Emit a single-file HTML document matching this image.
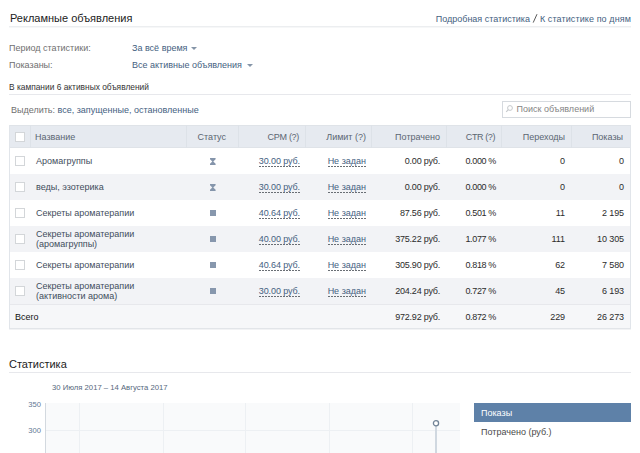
<!DOCTYPE html>
<html><head><meta charset="utf-8"><style>
html,body{margin:0;padding:0;background:#fff;}
body{width:640px;height:453px;position:relative;overflow:hidden;font-family:"Liberation Sans", sans-serif;}
.t{position:absolute;white-space:pre;}
.r{position:absolute;}
.dl{padding-bottom:1px;background:repeating-linear-gradient(90deg,#6a6f75 0 2px,transparent 2px 3px) left bottom/100% 1px no-repeat;}
</style></head><body>
<div class="t" style="top:12px;font-size:11px;line-height:12px;color:#222;left:10px;">Рекламные объявления</div>
<div class="t" style="top:14px;font-size:9px;line-height:10px;color:#45617f;letter-spacing:0.1px;right:9px;">К статистике по дням</div>
<div class="t" style="top:14px;font-size:9px;line-height:10px;color:#45617f;right:110px;">Подробная статистика</div>
<svg class="r" style="left:531px;top:12px" width="8" height="12"><path d="M6 2.2 L2.2 10.6" stroke="#5a5a5a" stroke-width="1"/></svg>
<div class="r" style="left:9px;top:26px;width:622px;height:1px;background:#eceef0;"></div>
<div class="r" style="left:9px;top:27px;width:622px;height:1px;background:#f6f7f8;"></div>
<div class="t" style="top:43px;font-size:9px;line-height:10px;color:#6f6f6f;left:9px;">Период статистики:</div>
<div class="t" style="top:60px;font-size:9px;line-height:10px;color:#6f6f6f;left:9px;">Показаны:</div>
<div class="t" style="top:43px;font-size:9px;line-height:10px;color:#45617f;left:132px;">За всё время</div>
<div class="t" style="top:60px;font-size:9px;line-height:10px;color:#45617f;left:132px;">Все активные объявления</div>
<div class="r" style="left:191px;top:47px;width:0;height:0;border-left:3px solid transparent;border-right:3px solid transparent;border-top:3px solid #8595a8"></div>
<div class="r" style="left:246.5px;top:64px;width:0;height:0;border-left:3px solid transparent;border-right:3px solid transparent;border-top:3px solid #8595a8"></div>
<div class="t" style="top:82px;font-size:8.4px;line-height:10px;color:#333;left:9px;">В кампании 6 активных объявлений</div>
<div class="r" style="left:9px;top:94px;width:622px;height:1px;background:#e7e8ec;"></div>
<div class="t" style="top:105px;font-size:9px;line-height:10px;color:#6f6f6f;left:11px;">Выделить: <span style="color:#45617f">все, запущенные, остановленные</span></div>
<div class="r" style="left:502px;top:101px;width:129px;height:17px;background:#fff;box-sizing:border-box;border:1px solid #d6dadf;"></div>
<svg class="r" style="left:505px;top:104px" width="10" height="10" viewBox="0 0 10 10"><circle cx="5" cy="4" r="2.4" fill="none" stroke="#c6c9cc" stroke-width="1"/><path d="M3.3 5.7 L1.2 7.8" stroke="#c6c9cc" stroke-width="1.2"/></svg>
<div class="t" style="top:104px;font-size:9px;line-height:10px;color:#858585;left:516.5px;">Поиск объявлений</div>
<div class="r" style="left:9px;top:125px;width:622px;height:23px;background:#e6eaf0;"></div>
<div class="r" style="left:9px;top:125px;width:622px;height:1px;background:#dfe3e8;"></div>
<div class="r" style="left:9px;top:147px;width:622px;height:1px;background:#dfe3e8;"></div>
<div class="r" style="left:30px;top:125px;width:1px;height:23px;background:#dde2e8;"></div>
<div class="r" style="left:186px;top:125px;width:1px;height:23px;background:#dde2e8;"></div>
<div class="r" style="left:238px;top:125px;width:1px;height:23px;background:#dde2e8;"></div>
<div class="r" style="left:305px;top:125px;width:1px;height:23px;background:#dde2e8;"></div>
<div class="r" style="left:371px;top:125px;width:1px;height:23px;background:#dde2e8;"></div>
<div class="r" style="left:446px;top:125px;width:1px;height:23px;background:#dde2e8;"></div>
<div class="r" style="left:501px;top:125px;width:1px;height:23px;background:#dde2e8;"></div>
<div class="r" style="left:571px;top:125px;width:1px;height:23px;background:#dde2e8;"></div>
<div class="r" style="left:9px;top:174px;width:622px;height:26px;background:#f2f3f6;"></div>
<div class="r" style="left:9px;top:226px;width:622px;height:26px;background:#f2f3f6;"></div>
<div class="r" style="left:9px;top:278px;width:622px;height:26px;background:#f2f3f6;"></div>
<div class="r" style="left:9px;top:304px;width:622px;height:24px;background:#f6f7f9;"></div>
<div class="r" style="left:9px;top:304px;width:622px;height:1px;background:#e7e8ec;"></div>
<div class="r" style="left:9px;top:328px;width:622px;height:1px;background:#e2e5e9;"></div>
<div class="r" style="left:9px;top:329px;width:622px;height:1px;background:#f2f3f5;"></div>
<div class="r" style="left:9px;top:125px;width:1px;height:204px;background:#e1e5ea;"></div>
<div class="r" style="left:630px;top:125px;width:1px;height:204px;background:#e1e5ea;"></div>
<div class="t" style="top:132px;font-size:9px;line-height:10px;color:#5b6672;left:35px;">Название</div>
<div class="t" style="top:132px;font-size:9px;line-height:10px;color:#5b6672;right:414px;">Статус</div>
<div class="t" style="top:132px;font-size:9px;line-height:10px;color:#5b6672;letter-spacing:-0.3px;right:341px;">CPM (?)</div>
<div class="t" style="top:132px;font-size:9px;line-height:10px;color:#5b6672;right:274px;">Лимит (?)</div>
<div class="t" style="top:132px;font-size:9px;line-height:10px;color:#5b6672;right:200px;">Потрачено</div>
<div class="t" style="top:132px;font-size:9px;line-height:10px;color:#5b6672;letter-spacing:-0.4px;right:145px;">CTR (?)</div>
<div class="t" style="top:132px;font-size:9px;line-height:10px;color:#5b6672;right:75px;">Переходы</div>
<div class="t" style="top:132px;font-size:9px;line-height:10px;color:#5b6672;right:17px;">Показы</div>
<div class="r" style="left:15px;top:132px;width:10px;height:10px;background:#fff;box-sizing:border-box;border:1px solid #d3d6d9;"></div>
<div class="r" style="left:15px;top:156px;width:10px;height:10px;background:#fff;box-sizing:border-box;border:1px solid #d3d6d9;"></div>
<div class="t" style="top:156px;font-size:9px;line-height:10px;color:#3f4d5c;left:36px;">Аромагруппы</div>
<svg class="r" style="left:210px;top:158px" width="6" height="7" viewBox="0 0 6 7"><path d="M0 0 H5.6 V1.2 L3.3 3.5 L5.6 5.8 V7 H0 V5.8 L2.3 3.5 L0 1.2 Z" fill="#8595ab"/></svg>
<div class="t" style="top:156px;font-size:9px;line-height:10px;color:#45617f;letter-spacing:-0.1px;right:340px;"><span class="dl">30.00 руб.</span></div>
<div class="t" style="top:156px;font-size:9px;line-height:10px;color:#45617f;right:274px;"><span class="dl">Не задан</span></div>
<div class="t" style="top:156px;font-size:9px;line-height:10px;color:#2b2b2b;letter-spacing:-0.22px;right:200px;">0.00 руб.</div>
<div class="t" style="top:156px;font-size:9px;line-height:10px;color:#2b2b2b;letter-spacing:-0.35px;right:144px;">0.000 %</div>
<div class="t" style="top:156px;font-size:9px;line-height:10px;color:#2b2b2b;letter-spacing:-0.1px;right:75px;">0</div>
<div class="t" style="top:156px;font-size:9px;line-height:10px;color:#2b2b2b;letter-spacing:-0.1px;right:16px;">0</div>
<div class="r" style="left:15px;top:182px;width:10px;height:10px;background:#fff;box-sizing:border-box;border:1px solid #d3d6d9;"></div>
<div class="t" style="top:182px;font-size:9px;line-height:10px;color:#3f4d5c;left:36px;">веды, эзотерика</div>
<svg class="r" style="left:210px;top:184px" width="6" height="7" viewBox="0 0 6 7"><path d="M0 0 H5.6 V1.2 L3.3 3.5 L5.6 5.8 V7 H0 V5.8 L2.3 3.5 L0 1.2 Z" fill="#8595ab"/></svg>
<div class="t" style="top:182px;font-size:9px;line-height:10px;color:#45617f;letter-spacing:-0.1px;right:340px;"><span class="dl">30.00 руб.</span></div>
<div class="t" style="top:182px;font-size:9px;line-height:10px;color:#45617f;right:274px;"><span class="dl">Не задан</span></div>
<div class="t" style="top:182px;font-size:9px;line-height:10px;color:#2b2b2b;letter-spacing:-0.22px;right:200px;">0.00 руб.</div>
<div class="t" style="top:182px;font-size:9px;line-height:10px;color:#2b2b2b;letter-spacing:-0.35px;right:144px;">0.000 %</div>
<div class="t" style="top:182px;font-size:9px;line-height:10px;color:#2b2b2b;letter-spacing:-0.1px;right:75px;">0</div>
<div class="t" style="top:182px;font-size:9px;line-height:10px;color:#2b2b2b;letter-spacing:-0.1px;right:16px;">0</div>
<div class="r" style="left:15px;top:208px;width:10px;height:10px;background:#fff;box-sizing:border-box;border:1px solid #d3d6d9;"></div>
<div class="t" style="top:208px;font-size:9px;line-height:10px;color:#3f4d5c;left:36px;">Секреты ароматерапии</div>
<div class="r" style="left:210px;top:210px;width:6px;height:6px;background:#8797ad;"></div>
<div class="t" style="top:208px;font-size:9px;line-height:10px;color:#45617f;letter-spacing:-0.1px;right:340px;"><span class="dl">40.64 руб.</span></div>
<div class="t" style="top:208px;font-size:9px;line-height:10px;color:#45617f;right:274px;"><span class="dl">Не задан</span></div>
<div class="t" style="top:208px;font-size:9px;line-height:10px;color:#2b2b2b;letter-spacing:-0.22px;right:200px;">87.56 руб.</div>
<div class="t" style="top:208px;font-size:9px;line-height:10px;color:#2b2b2b;letter-spacing:-0.35px;right:144px;">0.501 %</div>
<div class="t" style="top:208px;font-size:9px;line-height:10px;color:#2b2b2b;letter-spacing:-0.1px;right:75px;">11</div>
<div class="t" style="top:208px;font-size:9px;line-height:10px;color:#2b2b2b;letter-spacing:-0.1px;right:16px;">2 195</div>
<div class="r" style="left:15px;top:234px;width:10px;height:10px;background:#fff;box-sizing:border-box;border:1px solid #d3d6d9;"></div>
<div class="t" style="top:229px;font-size:9px;line-height:10px;color:#3f4d5c;left:36px;">Секреты ароматерапии</div>
<div class="t" style="top:239px;font-size:9px;line-height:10px;color:#3f4d5c;left:36px;">(аромагруппы)</div>
<div class="r" style="left:210px;top:236px;width:6px;height:6px;background:#8797ad;"></div>
<div class="t" style="top:234px;font-size:9px;line-height:10px;color:#45617f;letter-spacing:-0.1px;right:340px;"><span class="dl">40.00 руб.</span></div>
<div class="t" style="top:234px;font-size:9px;line-height:10px;color:#45617f;right:274px;"><span class="dl">Не задан</span></div>
<div class="t" style="top:234px;font-size:9px;line-height:10px;color:#2b2b2b;letter-spacing:-0.22px;right:200px;">375.22 руб.</div>
<div class="t" style="top:234px;font-size:9px;line-height:10px;color:#2b2b2b;letter-spacing:-0.35px;right:144px;">1.077 %</div>
<div class="t" style="top:234px;font-size:9px;line-height:10px;color:#2b2b2b;letter-spacing:-0.1px;right:75px;">111</div>
<div class="t" style="top:234px;font-size:9px;line-height:10px;color:#2b2b2b;letter-spacing:-0.1px;right:16px;">10 305</div>
<div class="r" style="left:15px;top:260px;width:10px;height:10px;background:#fff;box-sizing:border-box;border:1px solid #d3d6d9;"></div>
<div class="t" style="top:260px;font-size:9px;line-height:10px;color:#3f4d5c;left:36px;">Секреты ароматерапии</div>
<div class="r" style="left:210px;top:262px;width:6px;height:6px;background:#8797ad;"></div>
<div class="t" style="top:260px;font-size:9px;line-height:10px;color:#45617f;letter-spacing:-0.1px;right:340px;"><span class="dl">40.64 руб.</span></div>
<div class="t" style="top:260px;font-size:9px;line-height:10px;color:#45617f;right:274px;"><span class="dl">Не задан</span></div>
<div class="t" style="top:260px;font-size:9px;line-height:10px;color:#2b2b2b;letter-spacing:-0.22px;right:200px;">305.90 руб.</div>
<div class="t" style="top:260px;font-size:9px;line-height:10px;color:#2b2b2b;letter-spacing:-0.35px;right:144px;">0.818 %</div>
<div class="t" style="top:260px;font-size:9px;line-height:10px;color:#2b2b2b;letter-spacing:-0.1px;right:75px;">62</div>
<div class="t" style="top:260px;font-size:9px;line-height:10px;color:#2b2b2b;letter-spacing:-0.1px;right:16px;">7 580</div>
<div class="r" style="left:15px;top:286px;width:10px;height:10px;background:#fff;box-sizing:border-box;border:1px solid #d3d6d9;"></div>
<div class="t" style="top:281px;font-size:9px;line-height:10px;color:#3f4d5c;left:36px;">Секреты ароматерапии</div>
<div class="t" style="top:291px;font-size:9px;line-height:10px;color:#3f4d5c;left:36px;">(активности арома)</div>
<div class="r" style="left:210px;top:288px;width:6px;height:6px;background:#8797ad;"></div>
<div class="t" style="top:286px;font-size:9px;line-height:10px;color:#45617f;letter-spacing:-0.1px;right:340px;"><span class="dl">30.00 руб.</span></div>
<div class="t" style="top:286px;font-size:9px;line-height:10px;color:#45617f;right:274px;"><span class="dl">Не задан</span></div>
<div class="t" style="top:286px;font-size:9px;line-height:10px;color:#2b2b2b;letter-spacing:-0.22px;right:200px;">204.24 руб.</div>
<div class="t" style="top:286px;font-size:9px;line-height:10px;color:#2b2b2b;letter-spacing:-0.35px;right:144px;">0.727 %</div>
<div class="t" style="top:286px;font-size:9px;line-height:10px;color:#2b2b2b;letter-spacing:-0.1px;right:75px;">45</div>
<div class="t" style="top:286px;font-size:9px;line-height:10px;color:#2b2b2b;letter-spacing:-0.1px;right:16px;">6 193</div>
<div class="t" style="top:312px;font-size:9px;line-height:10px;color:#111;left:15px;">Всего</div>
<div class="t" style="top:312px;font-size:9px;line-height:10px;color:#2b2b2b;letter-spacing:-0.22px;right:200px;">972.92 руб.</div>
<div class="t" style="top:312px;font-size:9px;line-height:10px;color:#2b2b2b;letter-spacing:-0.35px;right:144px;">0.872 %</div>
<div class="t" style="top:312px;font-size:9px;line-height:10px;color:#2b2b2b;letter-spacing:-0.1px;right:75px;">229</div>
<div class="t" style="top:312px;font-size:9px;line-height:10px;color:#2b2b2b;letter-spacing:-0.1px;right:16px;">26 273</div>
<div class="t" style="top:358px;font-size:11px;line-height:12px;color:#222;left:9px;">Статистика</div>
<div class="r" style="left:9px;top:372px;width:622px;height:1px;background:#e7e8ec;"></div>
<div class="t" style="top:383px;font-size:7.7px;line-height:9px;color:#56687c;left:52px;">30 Июля 2017 – 14 Августа 2017</div>
<div class="r" style="left:46px;top:403px;width:414px;height:50px;background:#f9fafb;"></div>
<div class="r" style="left:45px;top:403px;width:1px;height:50px;background:#d3d9df;"></div>
<div class="r" style="left:79px;top:403px;width:1px;height:50px;background:#edf0f3;"></div>
<div class="r" style="left:163px;top:403px;width:1px;height:50px;background:#edf0f3;"></div>
<div class="r" style="left:245px;top:403px;width:1px;height:50px;background:#edf0f3;"></div>
<div class="r" style="left:329px;top:403px;width:1px;height:50px;background:#edf0f3;"></div>
<div class="r" style="left:412px;top:403px;width:1px;height:50px;background:#edf0f3;"></div>
<div class="r" style="left:46px;top:430px;width:414px;height:1px;background:#edf0f3;"></div>
<div class="t" style="top:400px;font-size:7.6px;line-height:9px;color:#5f7893;right:599px;">350</div>
<div class="t" style="top:426px;font-size:7.6px;line-height:9px;color:#5f7893;right:599px;">300</div>
<div class="r" style="left:435px;top:426px;width:2px;height:27px;background:#d0d8e0;"></div>
<svg class="r" style="left:432px;top:419px" width="8" height="8" viewBox="0 0 8 8"><circle cx="4" cy="4.3" r="2.6" fill="#fff" stroke="#718396" stroke-width="1.3"/></svg>
<div class="r" style="left:474px;top:403px;width:157px;height:19px;background:#5e81a8;"></div>
<div class="t" style="top:408px;font-size:9px;line-height:10px;color:#fff;left:481px;">Показы</div>
<div class="t" style="top:427px;font-size:9px;line-height:10px;color:#4a4a4a;left:481px;">Потрачено (руб.)</div>
</body></html>
